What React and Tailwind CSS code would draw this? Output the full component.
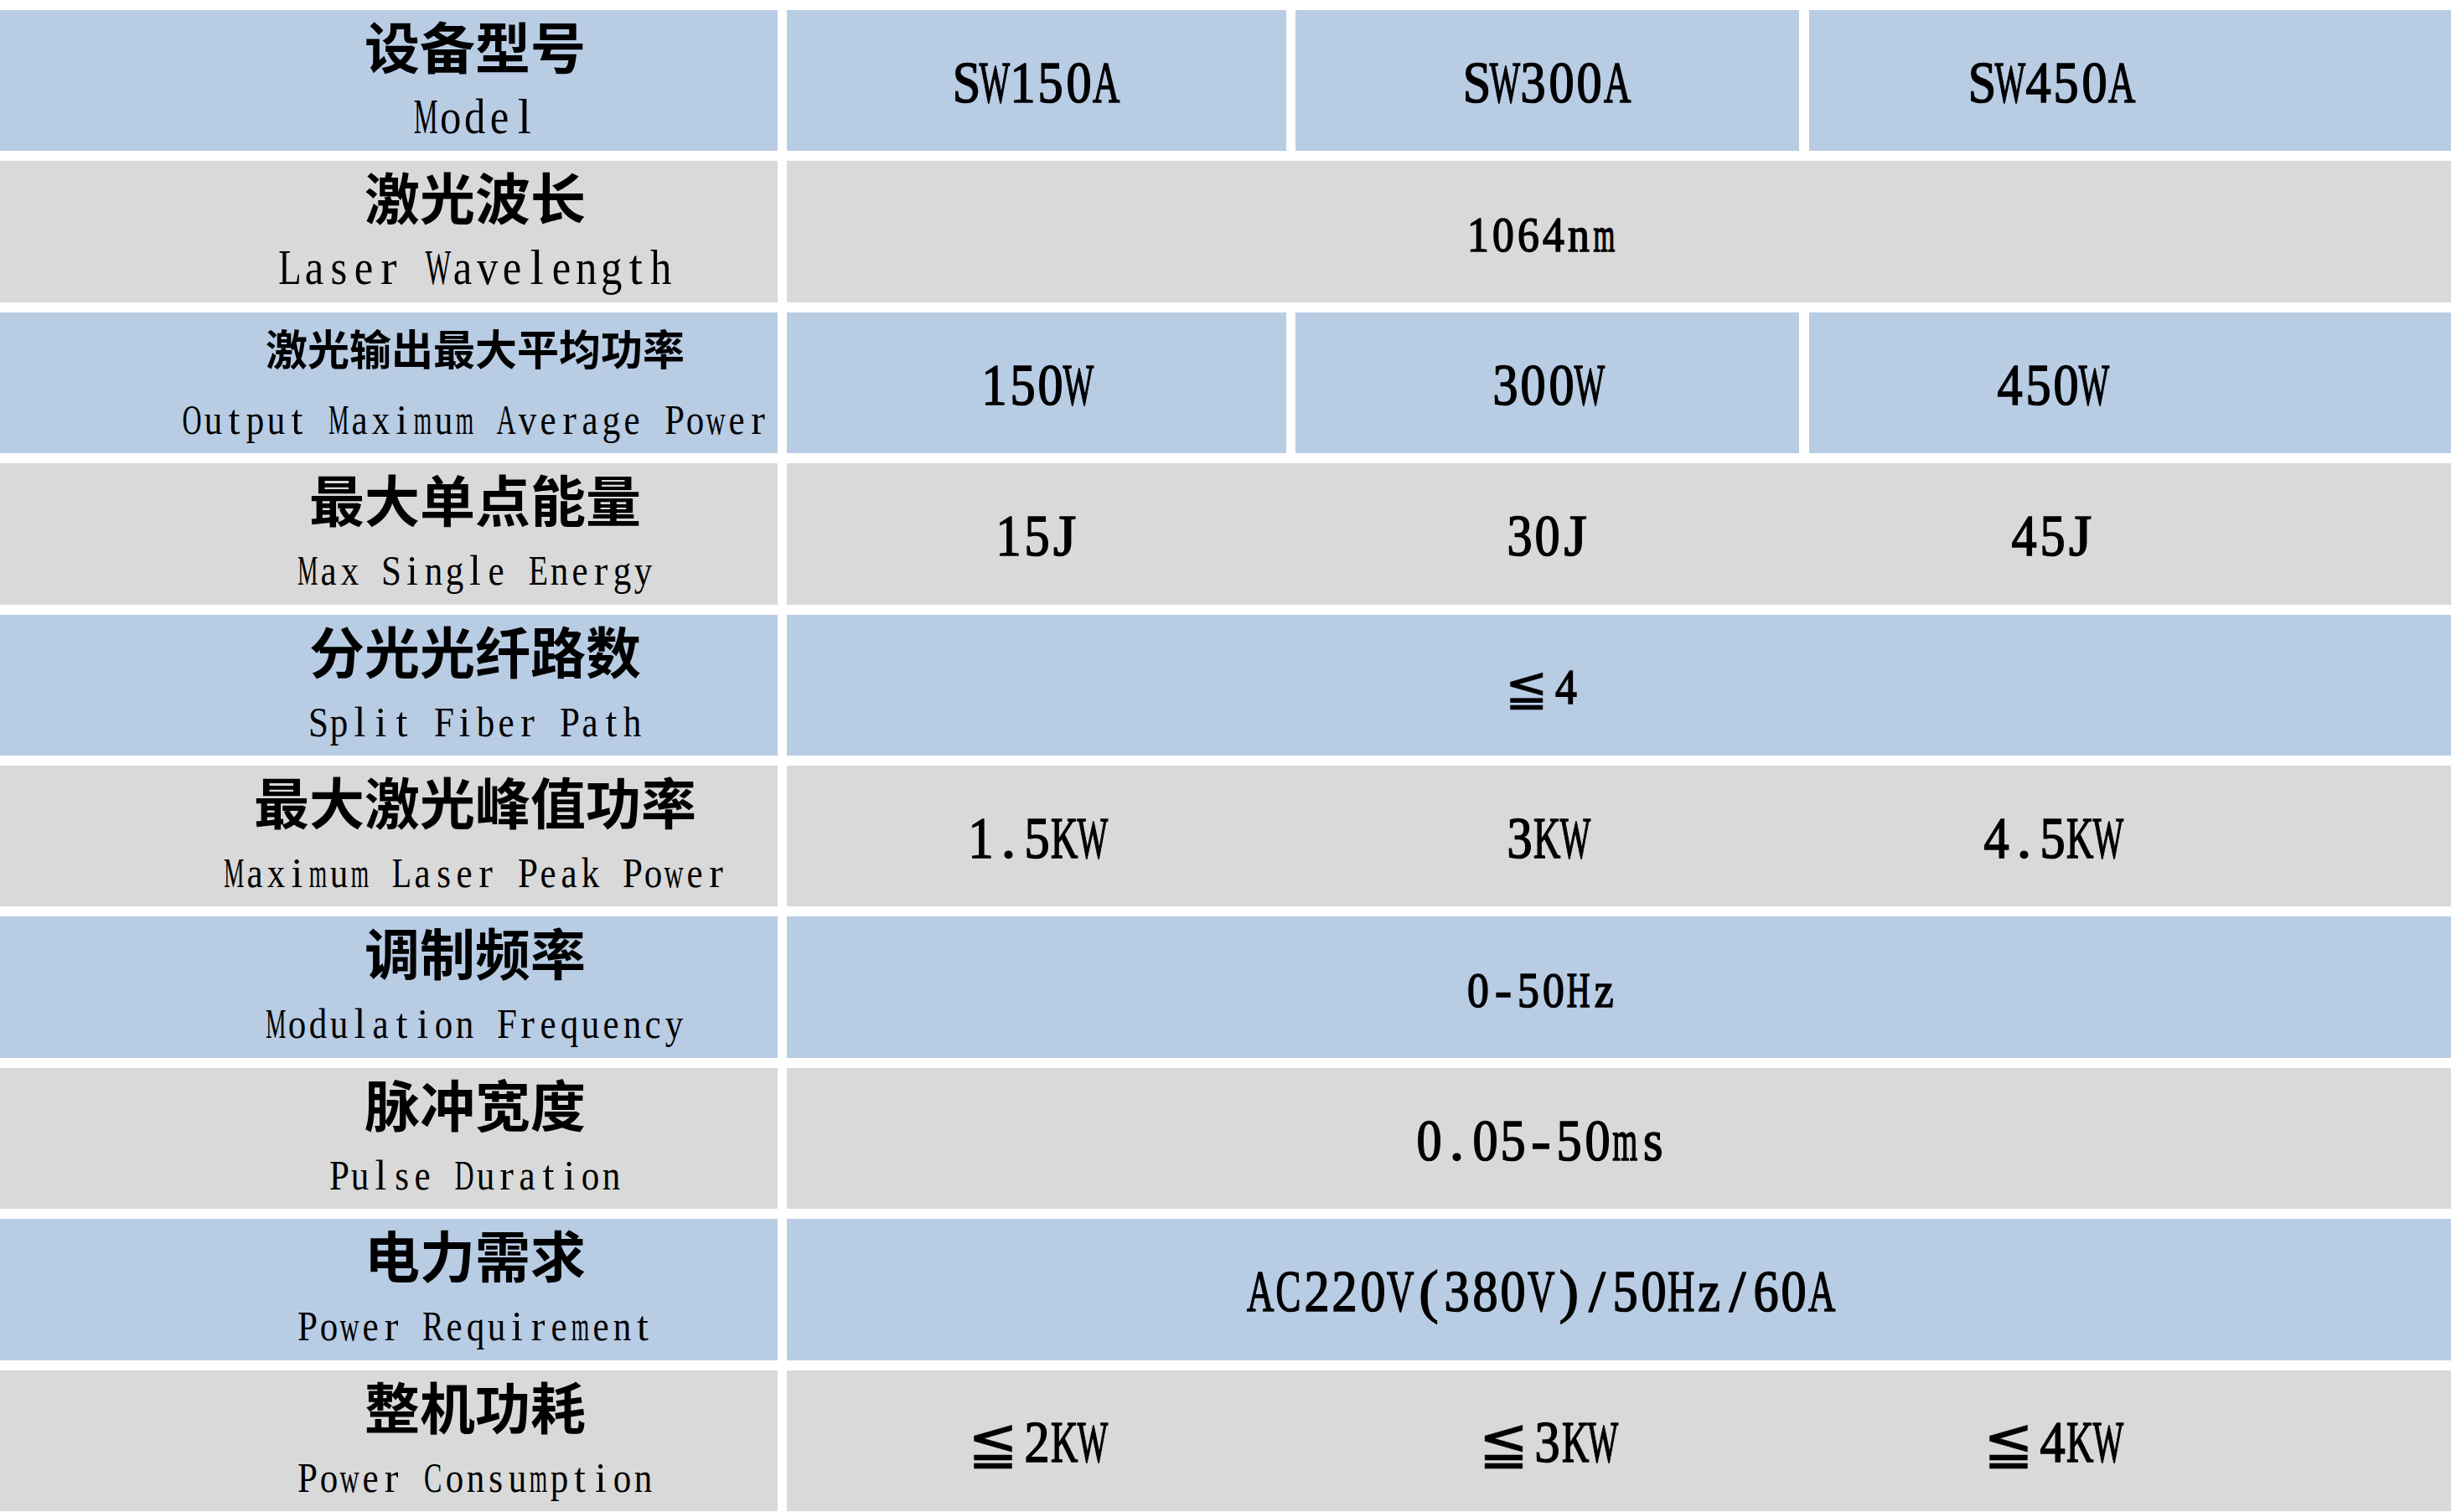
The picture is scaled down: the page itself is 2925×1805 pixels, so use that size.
import React from "react";

const S52 = "MWm";
const S62 = "ACDGHKNOQUVXYw";
const S75 = "BELRTZ";
const S85 = "abcdeghknopqsuvxyz0123456789FPS";

function glyphCls(ch) {
  if (S52.includes(ch)) return "inline-block shrink-0 scale-x-[0.55]";
  if (S62.includes(ch)) return "inline-block shrink-0 scale-x-[0.64]";
  if (S75.includes(ch)) return "inline-block shrink-0 scale-x-[0.76]";
  if (S85.includes(ch)) return "inline-block shrink-0 scale-x-[0.86]";
  return "inline-block shrink-0";
}

function Mono({ text, cell, wide }) {
  return (
    <span className="inline-flex whitespace-nowrap font-['Liberation_Serif',serif]">
      {Array.from(text).map((ch, i) =>
        ch === "≦" ? (
          <span
            key={i}
            className={`inline-flex justify-start items-baseline shrink-0 ${wide}`}
          >
            <span className="inline-block pl-[2px] text-[1.02em] font-normal [-webkit-text-stroke:0.6px_#000] font-['DejaVu_Sans','Noto_Sans_CJK_SC',sans-serif]">
              {ch}
            </span>
          </span>
        ) : (
          <span key={i} className={`inline-flex justify-center shrink-0 ${cell}`}>
            <span className={glyphCls(ch)}>{ch === " " ? "\u00a0" : ch}</span>
          </span>
        )
      )}
    </span>
  );
}

const rows = [
  { tone: "b", zh: "设备型号", en: "Model", big: true, vals: ["SW150A", "SW300A", "SW450A"] },
  { tone: "g", zh: "激光波长", en: "Laser Wavelength", big: true, span: "1064nm", small: true },
  { tone: "b", zh: "激光输出最大平均功率", zhSmall: true, en: "Output Maximum Average Power", vals: ["150W", "300W", "450W"] },
  { tone: "g", zh: "最大单点能量", en: "Max Single Energy", vals: ["15J", "30J", "45J"] },
  { tone: "b", zh: "分光光纤路数", en: "Split Fiber Path", span: "≦4", small: true },
  { tone: "g", zh: "最大激光峰值功率", en: "Maximum Laser Peak Power", vals: ["1.5KW", "3KW", "4.5KW"] },
  { tone: "b", zh: "调制频率", en: "Modulation Frequency", span: "0-50Hz", small: true },
  { tone: "g", zh: "脉冲宽度", en: "Pulse Duration", span: "0.05-50ms" },
  { tone: "b", zh: "电力需求", en: "Power Requirement", span: "AC220V(380V)/50Hz/60A" },
  { tone: "g", zh: "整机功耗", en: "Power Consumption", vals: ["≦2KW", "≦3KW", "≦4KW"] },
];

function Value({ text, small }) {
  return (
    <div className="h-full flex items-center justify-center pt-[6px] leading-none font-normal [-webkit-text-stroke:1.7px_#000]">
      {small ? (
        <span className="text-[60px] leading-none">
          <Mono text={text} cell="w-[30px]" wide="w-[60px]" />
        </span>
      ) : (
        <span className="text-[70px] leading-none">
          <Mono text={text} cell="w-[33.5px]" wide="w-[67px]" />
        </span>
      )}
    </div>
  );
}

function Row({ r }) {
  const bg = r.tone === "b" ? "bg-[#b8cce4]" : "bg-[#d9d9d9]";
  const gapped = r.tone === "b" && r.vals;
  return (
    <div className="flex h-[168.4px] shrink-0">
      <div className={`w-[928px] shrink-0 pl-[206px] flex flex-col items-center ${bg}`}>
        {r.zhSmall ? (
          <div className="pt-[16px] h-[90px] text-[50px] leading-none font-semibold font-['Noto_Sans_CJK_SC',sans-serif]">
            {r.zh}
          </div>
        ) : (
          <div className="pt-[8px] h-[90px] text-[66px] leading-none font-semibold font-['Noto_Sans_CJK_SC',sans-serif]">
            {r.zh}
          </div>
        )}
        {r.big ? (
          <div className="mt-[8px] text-[59px] leading-none">
            <Mono text={r.en} cell="w-[29.5px]" wide="w-[59px]" />
          </div>
        ) : (
          <div className="mt-[13px] text-[50px] leading-none">
            <Mono text={r.en} cell="w-[25px]" wide="w-[50px]" />
          </div>
        )}
      </div>
      <div className={`ml-[11px] flex-1 flex ${gapped ? "bg-white" : bg}`}>
        {r.vals ? (
          <>
            <div className={`w-[596px] shrink-0 ${bg}`}>
              <Value text={r.vals[0]} />
            </div>
            <div className={`ml-[11px] w-[601px] shrink-0 ${bg}`}>
              <Value text={r.vals[1]} />
            </div>
            <div className={`ml-[12px] flex-1 ${bg}`}>
              <div className="w-[580px] h-full">
                <Value text={r.vals[2]} />
              </div>
            </div>
          </>
        ) : (
          <div className="w-[1800px] h-full">
            <Value text={r.span} small={r.small} />
          </div>
        )}
      </div>
    </div>
  );
}

export default function App() {
  return (
    <div className="w-[2925px] h-[1805px] overflow-hidden bg-white pt-[12px] flex flex-col gap-[12px] text-black font-['Liberation_Serif',serif]">
      {rows.map((r, i) => (
        <Row key={i} r={r} />
      ))}
    </div>
  );
}
